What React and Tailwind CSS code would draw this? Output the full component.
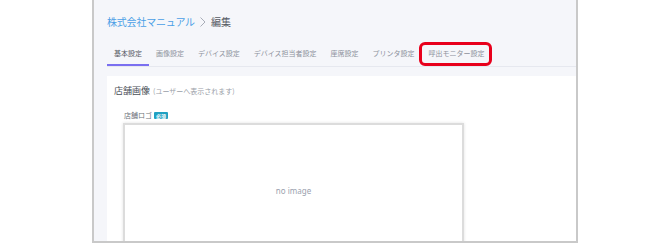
import React from 'react'

const TABS = [
  '基本設定',
  '画像設定',
  'デバイス設定',
  'デバイス担当者設定',
  '座席設定',
  'プリンタ設定',
  '呼出モニター設定',
]

const font = { fontFamily: '"Noto Sans CJK JP", "Noto Sans", sans-serif' }

export default function App() {
  return (
    <div className="w-[670px] h-[244px] bg-white overflow-hidden" style={font}>
      <div className="ml-[92px] w-[486px] h-[243px] border-x-2 border-b-2 border-[#c9c9c9] bg-[#f5f6fa] overflow-hidden">
        <div className="pl-[13px]">
          {/* Breadcrumb */}
          <div className="h-[14px] mt-[15px] flex items-center text-[10px] leading-none">
            <span className="text-[#4b9fe6] tracking-[-0.2px]">株式会社マニュアル</span>
            <svg width="8" height="12" viewBox="0 0 8 12" className="mx-[4px]">
              <path d="M1.5 1.5 L6 6 L1.5 10.5" fill="none" stroke="#a8adb8" strokeWidth="1" />
            </svg>
            <span className="text-[#555a63]">編集</span>
          </div>

          {/* Tabs */}
          <div className="mt-[14px] flex border-b border-[#e6e8ef]">
            {TABS.map((t, i) => (
              <div
                key={t}
                className={
                  'relative h-[23px] px-[7px] flex items-center text-[7px] leading-none border-b-2 ' +
                  (i === 0 ? 'border-[#7a6ff0] text-[#555a63]' : 'border-transparent text-[#8d929c]')
                }
              >
                {t}
                {i === 6 && (
                  <span className="absolute -left-[3px] right-0 -top-[1px] bottom-[-2px] border-[3px] border-[#e8001c] rounded-[6px]" />
                )}
              </div>
            ))}
          </div>

          {/* Card */}
          <div className="mt-[9px] bg-white h-[200px] pl-[7px] pt-[10px]">
            <div className="flex items-baseline leading-none">
              <span className="text-[9px] text-[#4a4f57]">店舗画像</span>
              <span className="text-[7px] text-[#9aa0a8] ml-[3px]">(ユーザーへ表示されます)</span>
            </div>
            <div className="ml-[10px] mt-[17px] flex items-center leading-none">
              <span className="text-[7px] text-[#6d727b]">店舗ロゴ</span>
              <span className="ml-[2px] h-[7px] px-[2px] bg-[#1ea0c2] text-white text-[5px] font-bold rounded-[1px] flex items-center">必須</span>
            </div>
            <div className="ml-[9px] mt-[4px] w-[341px] h-[136px] border-2 border-[#dcdcdc] shadow-[0_0_3px_rgba(0,0,0,0.12)] flex items-center justify-center">
              <span className="text-[8px] text-[#9a9fae]" style={{ fontFamily: '"Noto Sans", sans-serif' }}>no image</span>
            </div>
          </div>
        </div>
      </div>
    </div>
  )
}
